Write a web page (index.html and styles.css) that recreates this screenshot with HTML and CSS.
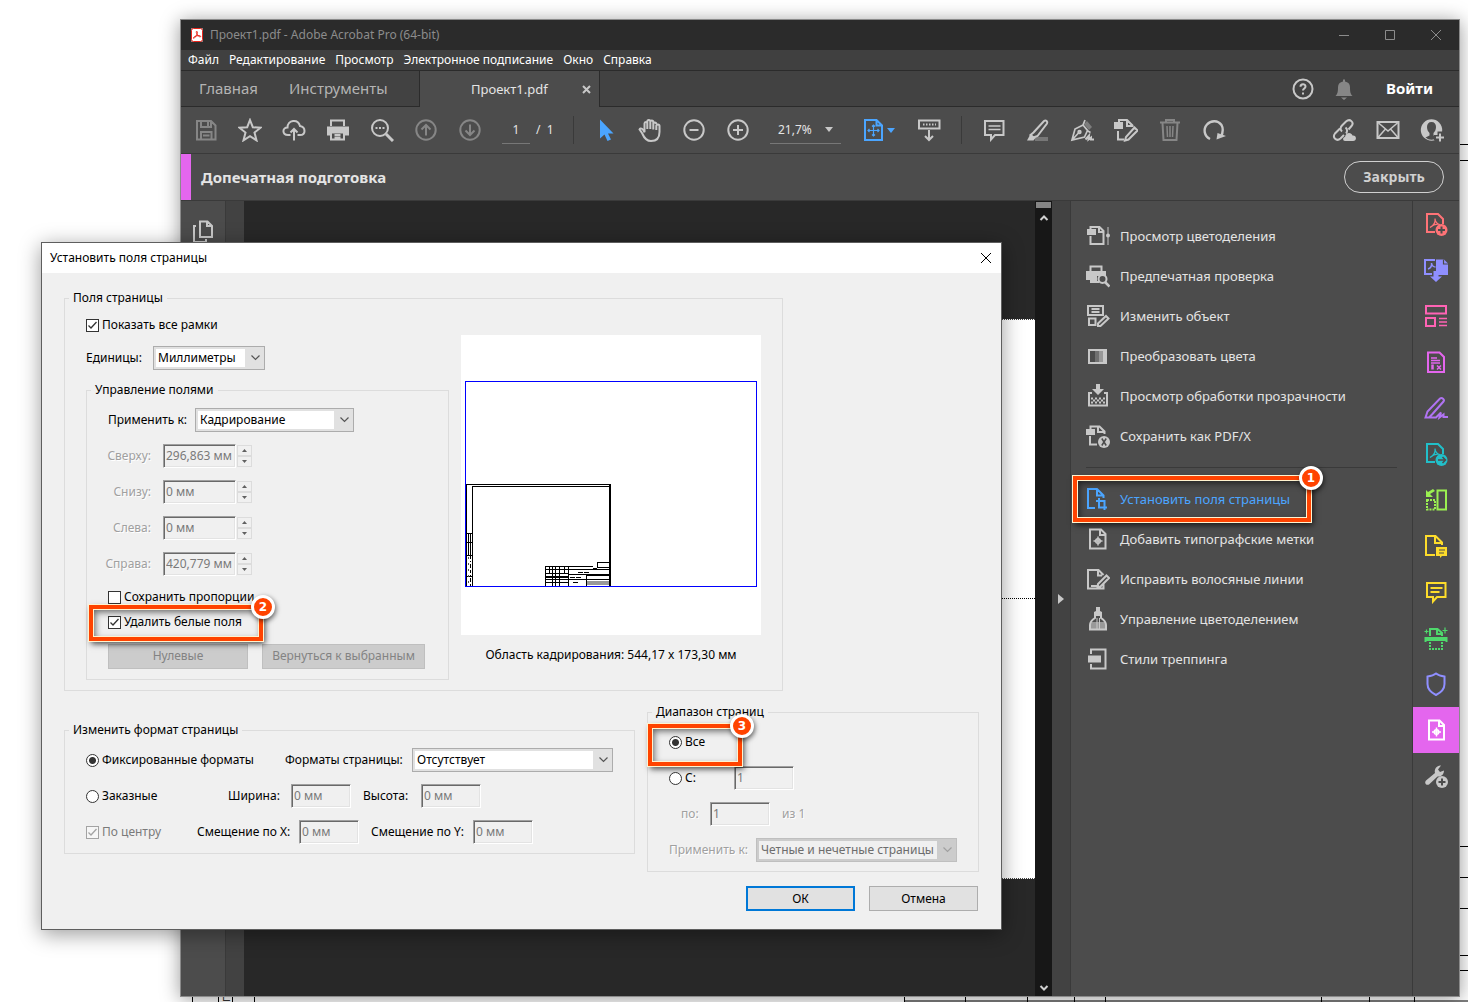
FILE: index.html
```html
<!DOCTYPE html>
<html lang="ru">
<head>
    <meta charset="UTF-8">
    <meta name="viewport" content="width=device-width, initial-scale=1.0">
    <title>Проект1.pdf - Adobe Acrobat Pro (64-bit)</title>
    <link rel="stylesheet" href="styles.css">
</head>
<body>
    <!-- Drawing sheet behind the windows -->
    <svg class="sheet" width="1468" height="1002" stroke="#000" fill="none" aria-hidden="true">
        <path d="M1440 144.500h28M1440 160.500h28M1440 846.500h28M1440 877.500h28M1440 908.500h28M1440 955.500h28M1440 970.500h28"/>
        <path d="M904 1001h564M904.500 990v12M965.500 990v12M1027.500 990v12M1074.500 990v12M1105.500 990v12M1321.500 990v12M1369.500 990v12M1414.500 990v12"/>
        <path d="M192.500 990v12M218.500 990v12M232.500 990v12M254.500 990v12"/>
        <text x="-1002" y="230" transform="rotate(-90)" fill="#333" stroke="none" font-size="12">по</text>
    </svg>

    <div class="window">
        <header class="titlebar">
            <svg class="app-icon" width="12" height="14" viewBox="0 0 12 14"><rect width="12" height="14" rx="2" fill="#fff"/><rect x=".5" y=".5" width="11" height="13" rx="2" fill="none" stroke="#e8251b"/><path d="M5.500 3.500c1.500-.5 1 2-.5 4.500s-3 3-2.500 1.500 6-2.500 7-1.500-1.500 1.500-3-1-1.500-3.500-1-3.500z" fill="none" stroke="#e8251b"/></svg>
            <span class="titlebar-text">Проект1.pdf - Adobe Acrobat Pro (64-bit)</span>
            <button class="win-btn" aria-label="Свернуть"><svg width="12" height="12"><path d="M1 6.500h10"/></svg></button>
            <button class="win-btn" aria-label="Развернуть"><svg width="12" height="12"><path d="M1.500 1.500h9v9h-9z"/></svg></button>
            <button class="win-btn" aria-label="Закрыть окно"><svg width="12" height="12"><path d="M1 1l10 10M11 1L1 11"/></svg></button>
        </header>

        <nav class="menubar">
            <a href="#">Файл</a>
            <a href="#">Редактирование</a>
            <a href="#">Просмотр</a>
            <a href="#">Электронное подписание</a>
            <a href="#">Окно</a>
            <a href="#">Справка</a>
        </nav>

        <div class="tabs">
            <a class="tab tab-home" href="#">Главная</a>
            <a class="tab tab-tools" href="#">Инструменты</a>
            <div class="tab-active">
                <span>Проект1.pdf</span>
                <button class="tab-close" aria-label="Закрыть вкладку"><svg width="9" height="9"><path d="M1 1l7 7M8 1L1 8" stroke-width="2"/></svg></button>
            </div>
            <div class="account">
                <button class="icon-btn" aria-label="Помощь"><svg viewBox="0 0 24 24"><circle cx="12" cy="12" r="9.500"/><path d="M9.500 9.800c0-3.300 5-3.300 5-.3 0 2-2.500 1.900-2.500 4M12 15.500v2"/></svg></button>
                <button class="icon-btn dim" aria-label="Уведомления"><svg viewBox="0 0 24 24"><path class="solid" d="M3.500 19c2-2 2.500-4 2.500-9 0-3 2-5 5-5.500V2.500h2v2c3 .5 5 2.500 5 5.500 0 5 .5 7 2.500 9zM9 20.500h6L12 23z"/></svg></button>
                <a class="signin" href="#">Войти</a>
            </div>
        </div>

        <div class="toolbar">
            <button class="icon-btn dim" aria-label="Сохранить"><svg viewBox="0 0 24 24"><path d="M3 3h14l4.500 4.500V21.500H3zM7 3v6h10V3M14 4v4M7 21v-7h10.500v7M9 17.500h6.500"/></svg></button>
            <button class="icon-btn" aria-label="Избранное"><svg viewBox="0 0 24 24"><path d="M12 2l2.800 7.200 7.700.5-6 4.900 2 7.700-6.500-4.200-6.500 4.200 2-7.700-6-4.900 7.700-.5z"/></svg></button>
            <button class="icon-btn" aria-label="Загрузить в облако"><svg viewBox="0 0 24 24"><path d="M8.500 17H6C0 17 0 9.500 5.500 9.500 5.500 1.500 16 .5 18 8c6 1 6 9 0 9h-2.500M12 22.500V11M8.500 14.500L12 11l3.500 3.500"/></svg></button>
            <button class="icon-btn" aria-label="Печать"><svg viewBox="0 0 24 24"><path class="solid" d="M1 8.500h22v9h-4V15H5v2.500H1z"/><path d="M5 8V2.500h13V8M5 14.500h13v7H5zM8.500 17h6M8.500 19.500h6"/></svg></button>
            <button class="icon-btn" aria-label="Найти"><svg viewBox="0 0 24 24"><circle cx="10" cy="10" r="8"/><path d="M16 16l7 7" stroke-width="3"/><path class="dots" d="M5.500 10h2M9 10h2M12.500 10h2"/></svg></button>
            <button class="icon-btn dim" aria-label="Предыдущая страница"><svg viewBox="0 0 24 24"><circle cx="12" cy="12" r="9.700"/><path d="M12 17.500V7M7.500 11.500L12 7l4.500 4.500"/></svg></button>
            <button class="icon-btn dim" aria-label="Следующая страница"><svg viewBox="0 0 24 24"><circle cx="12" cy="12" r="9.700"/><path d="M12 6.500V17M7.500 12.500L12 17l4.500-4.500"/></svg></button>
            <input class="page-num" type="text" value="1" aria-label="Номер страницы">
            <span class="page-total">/&nbsp; 1</span>
            <span class="sep"></span>
            <button class="icon-btn active" aria-label="Выделение"><svg viewBox="0 0 24 24"><path class="solid" d="M6 1.500v19l4.500-4 3 6.500 3.500-1.500-3-6h5.500z"/></svg></button>
            <button class="icon-btn" aria-label="Рука"><svg viewBox="0 0 24 24"><path d="M6.500 14V5.500c0-2 2.800-2 2.800 0V11 3.500c0-2 3-2 3 0V11 4c0-2 3-2 3 0v7.500V6c0-2 3-2 3 0M18.300 12V8c0-2 3.200-2 3.200 0v6c0 6-3.500 9-8.500 9-5 0-7-3.500-8.500-7-1-2.500-2-3-3-4.500 1-2.500 4-.5 5 3"/></svg></button>
            <button class="icon-btn" aria-label="Уменьшить"><svg viewBox="0 0 24 24"><circle cx="12" cy="12" r="9.700"/><path d="M7.500 12h9"/></svg></button>
            <button class="icon-btn" aria-label="Увеличить"><svg viewBox="0 0 24 24"><circle cx="12" cy="12" r="9.700"/><path d="M7 12h10M12 7v10"/></svg></button>
            <select class="zoom" aria-label="Масштаб"><option>21,7%</option></select>
            <button class="icon-btn fit active" aria-label="По размеру страницы"><svg viewBox="0 0 24 24"><path d="M4 2h11.500L21 7.500V22H4zM15.500 2v5.500H21"/><path d="M12.500 7v11M7 12.500h11M11 8.500L12.500 7 14 8.500M11 16.500l1.500 1.500 1.500-1.500M8.500 11L7 12.500 8.500 14M16.500 11l1.500 1.500-1.500 1.500" stroke-width="1.200"/></svg><svg class="caret" viewBox="0 0 8 5"><path class="solid" d="M0 0h8L4 5z"/></svg></button>
            <button class="icon-btn" aria-label="Панель инструментов"><svg viewBox="0 0 24 24"><path d="M2 2.500h20.500v8H2zM12 12v10M8 18l4 4 4-4"/><path class="dots" d="M6 6.500h1.500M9 6.500h1.500M12 6.500h1.500M15 6.500h1.500M18 6.500h1"/></svg></button>
            <span class="sep"></span>
            <button class="icon-btn" aria-label="Комментарий"><svg viewBox="0 0 24 24"><path d="M3 3h18.500v14H13l-4 4.500V17H3z"/><path d="M6.500 8h12M6.500 11.500h12" stroke-width="1.500"/></svg></button>
            <button class="icon-btn" aria-label="Маркер"><svg viewBox="0 0 24 24"><path d="M9 21h13" stroke="#777" stroke-width="4"/><path d="M7.500 14.500L18 3c2-1.500 4 .5 3 2.500L11.500 18l-4 1.500-3-2.500z"/><path class="solid" d="M1 22.500l3.500-6.500 5 4-2 2.500z"/></svg></button>
            <button class="icon-btn" aria-label="Подпись"><svg viewBox="0 0 24 24"><path class="solid" d="M14 6l3-3 5 6-3 3z" opacity=".4"/><path d="M2 22l3-11 8-4 4.500 5.500-3 6.500zM2 22l6.500-7M13 7l2-5M17 12.500l3.500 2" stroke-width="1.700"/><circle cx="9.500" cy="14" r="1.200"/><path d="M15.500 21.500l3.500-4-.5 4 2.500-2v2H24"/></svg></button>
            <button class="icon-btn" aria-label="Редактировать PDF"><svg viewBox="0 0 24 24"><path class="solid" d="M0 4h9v7H0z"/><path d="M5 4V2h8l5.500 5.500V9M13 2v6h5M4 13v8.500h6M20.500 9.500L23.500 12.500l-9 9-3.500 1 1-3.500z"/></svg></button>
            <button class="icon-btn dim" aria-label="Удалить"><svg viewBox="0 0 24 24"><path d="M2 4.500h20M8 4V2h8v2M4.500 5l1 17h13l1-17"/><path d="M9 8l.5 11M12 8v11M15 8l-.5 11" stroke-width="1.500"/></svg></button>
            <button class="icon-btn" aria-label="Повернуть"><svg viewBox="0 0 24 24"><path d="M8 21C2 18 1 11 5 6.500 9 2 16 2 19.500 7c2 3.500 1.500 7.500-.5 11.500" stroke-width="2.400"/><path class="solid" d="M14.500 21.500l1-6.500 8.500 3z"/></svg></button>
            <button class="icon-btn push" aria-label="Ссылка"><svg viewBox="0 0 24 24"><path d="M10 13.500c-2-2-1.500-4.500 0-6l4-4c4-3.500 8.500 1 5.500 4.500l-3 3.500M13.500 9.500c2 1.500 2 4.500.5 6M8 10.500l-5 5c-3 4 1.500 8.500 5.500 5l3.500-3.500"/><path class="solid" d="M13 23c-2.500 0-2.500-4 0-4 .5-5 6.500-5 7.500-1.500 4.500-.5 4.500 5.500.5 5.500z"/></svg></button>
            <button class="icon-btn" aria-label="Почта"><svg viewBox="0 0 24 24"><path d="M1.500 4h21v16h-21z"/><path d="M2 4.500l10 8.500 10-8.500M2 19.500l7.500-8.500M22 19.500L14.500 11" stroke-width="1.500"/></svg></button>
            <button class="icon-btn" aria-label="Добавить пользователя"><svg viewBox="0 0 24 24"><circle class="solid" cx="11.500" cy="12" r="10.700"/><path d="M11.500 4c3 0 4.500 2 4.500 5 0 2.500-1 4.500-2.500 6v2.500l4 2a9 9 0 0 1-12 0l4-2V15C8 13.500 7 11.500 7 9c0-3 1.500-5 4.500-5z" fill="#4c4c4c" stroke="none"/><path d="M20 13.500v11M14 19.500h10" stroke="#4c4c4c" stroke-width="5"/><path d="M20 15.500v8M16 19.500h8"/></svg></button>
        </div>

        <div class="toolhead">
            <h1>Допечатная подготовка</h1>
            <button class="close-btn">Закрыть</button>
        </div>

        <div class="workspace">
            <div class="left-rail">
                <button class="icon-btn" aria-label="Миниатюры страниц"><svg viewBox="0 0 24 24"><path d="M9 1.500h7.500L21 6v11H9zM16 1.500V6h5M5 6H3v16h12v-3"/></svg></button>
            </div>
            <div class="gutter"></div>
            <div class="canvas"><div class="page"><div class="page-half"></div></div></div>
            <div class="scrollbar">
                <span class="scroll-thumb"></span>
                <svg viewBox="0 0 10 8"><path d="M1.500 6L5 2.500 8.500 6"/></svg>
                <svg class="scroll-down" viewBox="0 0 10 8"><path d="M1.500 2L5 5.500 8.500 2"/></svg>
            </div>
            <div class="splitter"><svg width="6" height="10"><path class="solid" d="M0 0l6 5-6 5z"/></svg></div>

            <aside class="panel">
                <a class="tool" href="#"><svg viewBox="0 0 24 24"><path class="solid" d="M1 5h9v6H1z"/><path d="M4.500 5V3h9l4 4v13h-13v-8M13 3v5h4"/><path d="M22 3v18" stroke="#888"/><circle class="solid" cx="22" cy="11.500" r="2"/></svg>Просмотр цветоделения</a>
                <a class="tool" href="#"><svg viewBox="0 0 24 24"><path class="solid" d="M0 7h20v5h-9v6H4v-2H0z"/><path d="M4.500 7V2.500h11V7M5 11.500v6.500h8M7 14h4"/><circle cx="16.500" cy="15" r="4" fill="#4c4c4c"/><path d="M19 18l4.500 4.500" stroke-width="2.500"/></svg>Предпечатная проверка</a>
                <a class="tool" href="#"><svg viewBox="0 0 24 24"><path d="M2 2h15v9H2zM5.500 5h8M5.500 8h8M3 14.500h6.500V21H3zM20 12l2.500 2.500-8 7.500H12v-2.500z"/></svg>Изменить объект</a>
                <a class="tool" href="#"><svg viewBox="0 0 24 24"><path class="solid" d="M2 5h19v15H2z"/><path d="M4 7h5v11H4z" fill="#4c4c4c" stroke="none"/><path d="M9 7h4v11H9z" fill="#707070" stroke="none"/><path d="M13 7h4v11h-4z" fill="#989898" stroke="none"/></svg>Преобразовать цвета</a>
                <a class="tool" href="#"><svg viewBox="0 0 24 24"><path class="solid" d="M10 0h4v5h4l-6 6-6-6h4z"/><path d="M6 9H3v12.500h18V9h-3"/><path d="M5 14.500h14M7 16.500h12M5 18.500h14" stroke-dasharray="2 2"/></svg>Просмотр обработки прозрачности</a>
                <a class="tool" href="#"><svg viewBox="0 0 24 24"><path class="solid" d="M0 5h9v6H0z"/><path d="M4.500 5V2.500h9l5 5V10M12 3v5h6M4 12v8.500h7"/><circle class="solid" cx="18" cy="18" r="6"/><path d="M15.800 14.500l4.400 7M20.200 14.500l-4.400 7" stroke="#4c4c4c" stroke-width="1.500"/></svg>Сохранить как PDF/X</a>
                <hr>
                <a class="tool active" href="#"><svg viewBox="0 0 24 24"><path d="M9 21H2V2h9l6.500 6.500V11M11 2v6.500h6.500M13 11v9.500h8M10 14h8.500v9"/></svg>Установить поля страницы<span class="callout callout-1"><b>1</b></span></a>
                <a class="tool" href="#"><svg viewBox="0 0 24 24"><path d="M4 2.500h11L19.500 7v14.500H4zM14 3v5h5"/><path d="M12 9.500v9M7.500 14h9" stroke-width="1.500"/><circle cx="12" cy="14" r="2.300" stroke-width="1.500"/></svg>Добавить типографские метки</a>
                <a class="tool" href="#"><svg viewBox="0 0 24 24"><path d="M17.500 17v4.500H2V3h10.500l5 5M12 3v5.500h4M5 19h6M20.500 8.500L23 11l-8.500 8.500-3 .5.500-3z"/></svg>Исправить волосяные линии</a>
                <a class="tool" href="#"><svg viewBox="0 0 24 24"><path d="M4 15h16v7H4z" fill="#999" stroke="none"/><path class="solid" d="M10 0h4v4l2 1v4H8V5l2-1z"/><path d="M9 8v3c-3 2-5 5-5 7v4.500h16V18c0-2-2-5-5-7V8"/><path d="M11 11v11M13.500 11v11" stroke-width="1"/></svg>Управление цветоделением</a>
                <a class="tool" href="#"><svg viewBox="0 0 24 24"><path d="M5 7V2.500h14.500v19H5V17"/><rect class="solid" x="2" y="8.500" width="13" height="7"/></svg>Стили треппинга</a>
            </aside>

            <div class="right-rail">
                <button class="rail-btn red" aria-label="Создать PDF"><svg viewBox="0 0 24 24"><path d="M11 20H3V2h11l5 5v5"/><path d="M6 15.500c4-2 5.500-5.500 5-9 0 3 2.500 6 5 6-3-1-7 .5-10 3z" stroke-width="1.200"/><circle class="solid" cx="17.500" cy="18" r="6"/><path d="M17.500 14.500v7M14 18h7" stroke="#4c4c4c"/></svg></button>
                <button class="rail-btn violet" aria-label="Объединить файлы"><svg viewBox="0 0 24 24"><path class="solid" d="M12 1.500h8l4 4V17h-9.500v1.500H18l-6 5.500-6-5.500h3.500V13H12z"/><path d="M8 16H1V2h10"/><path d="M4 11c3-1 4-3 3.500-6 .5 3 2 4 4 4" stroke-width="1.500"/><path d="M19.500 1.500V6H24" stroke="#4c4c4c" stroke-width="1.200"/></svg></button>
                <button class="rail-btn pink" aria-label="Систематизировать"><svg viewBox="0 0 24 24"><path d="M2 2h20v7.500H2zM2 14h9v8H2z"/><path d="M15 14.500h8M15 18h8M15 21.500h8" stroke-width="1.500"/></svg></button>
                <button class="rail-btn magenta" aria-label="Подготовить форму"><svg viewBox="0 0 24 24"><path d="M4 2.500h11.500L20 7v15H4z"/><path d="M7 8h6M7 10.500h9M7 13h9M13 15.500l4 4M17 15.500l-4 4" stroke-width="1.500"/><path d="M8.500 14.500v5" stroke-width="2.500"/></svg></button>
                <button class="rail-btn purple" aria-label="Заполнить и подписать"><svg viewBox="0 0 24 24"><path d="M1.500 21.500l2-6L16 2.500c2-1.500 5 1 3.500 3L8 18.500l-3 3zM2 21.500h10l5-5-1.500 5 4-3v2.500H24"/></svg></button>
                <button class="rail-btn cyan" aria-label="Экспорт PDF"><svg viewBox="0 0 24 24"><path d="M11 20H3V2h11l5 5v5"/><path d="M6 15.500c4-2 5.500-5.500 5-9 0 3 2.500 6 5 6-3-1-7 .5-10 3z" stroke-width="1.200"/><circle class="solid" cx="17.500" cy="18" r="6"/><path d="M14 18h7M18.500 15l3 3-3 3" stroke="#4c4c4c" stroke-width="1.500"/></svg></button>
                <button class="rail-btn lime" aria-label="Упорядочить страницы"><svg viewBox="0 0 24 24"><path d="M13.500 2.500H22v19h-8.500z"/><path class="solid" d="M2 2l2 2 5-3 2 2-5 3 3 3H2z"/><path d="M3 12h8v9.500H3z" stroke-dasharray="2 1"/></svg></button>
                <button class="rail-btn yellow" aria-label="Отправить на рецензирование"><svg viewBox="0 0 24 24"><path d="M11 21H2V2h9.500L18 8.500V11M11 2v7h7"/><path class="solid" d="M12 13h11v9h-5l-2 2v-2h-4z"/><path d="M15 16h6M15 19h5" stroke="#4c4c4c" stroke-width="1"/></svg></button>
                <button class="rail-btn yellow" aria-label="Комментарии"><svg viewBox="0 0 24 24"><path d="M3 3h18.500v14H13l-4 4.500V17H3zM6.500 8h12M6.500 12h9"/></svg></button>
                <button class="rail-btn green" aria-label="Сканирование"><svg viewBox="0 0 24 24"><path d="M6 10V3h7.500L18 7v3M13 3v5h5M1.500 16v-4h21v4"/><path class="solid" d="M1 11h22v4H1z"/><path d="M6 16v7h12v-7" stroke-dasharray="2 1"/><path d="M21 1.500v6M18.500 4.500h5M2.500 3.500v4M.5 5.500h4" stroke-width="1.200"/></svg></button>
                <button class="rail-btn violet" aria-label="Защитить"><svg viewBox="0 0 24 24"><path d="M12 1.500c2.500 2 5 2.500 8.500 3V12c0 5-3.500 8.500-8.500 11-5-2.500-8.500-6-8.500-11V4.500c3.500-.5 6-1 8.500-3z"/></svg></button>
                <button class="rail-btn current" aria-label="Допечатная подготовка"><svg viewBox="0 0 24 24"><path d="M5 2.500h10.500L20 7v14.500H5zM15 3v5h5"/><path d="M12.500 9.500v9M8 14h9" stroke-width="1.500"/><circle cx="12.500" cy="14" r="2.300" stroke-width="1.500"/></svg></button>
                <button class="rail-btn" aria-label="Дополнительные инструменты"><svg viewBox="0 0 24 24"><path class="solid" d="M11 9c-1-4 2-8 6-7.500l-3 4 2 2.500 4-1.500c0 4-3 6.500-6.500 6L5 20.500c-3 1.500-5-2-3-4z"/><circle cx="18" cy="18" r="6" class="solid"/><path d="M18 14.500v7M14.500 18h7" stroke="#4c4c4c"/></svg></button>
            </div>
        </div>
    </div>

    <form class="dialog" role="dialog" aria-labelledby="dialogTitle">
        <div class="dialog-title">
            <h2 id="dialogTitle">Установить поля страницы</h2>
            <button type="button" class="dialog-close" aria-label="Закрыть"><svg width="12" height="12"><path d="M1 1l10 10M11 1L1 11"/></svg></button>
        </div>
        <div class="dialog-body">
            <fieldset class="margins">
                <legend>Поля страницы</legend>
                <div class="margins-grid">
                    <div class="stack">
                        <label class="check"><input type="checkbox" checked>Показать все рамки</label>
                        <div class="row">
                            <label class="w-units" for="units">Единицы:</label>
                            <select class="combo units" id="units"><option>Миллиметры</option></select>
                        </div>
                        <fieldset class="controls">
                            <legend>Управление полями</legend>
                            <div class="stack">
                                <div class="row">
                                    <label class="w-apply" for="applyTo">Применить к:</label>
                                    <select class="combo apply" id="applyTo"><option>Кадрирование</option></select>
                                </div>
                                <div class="row off">
                                    <label class="w-side" for="top">Сверху:</label>
                                    <input class="field side" id="top" type="text" value="296,863 мм" disabled>
                                    <span class="spin"><button type="button" disabled aria-label="Больше"></button><button type="button" class="down" disabled aria-label="Меньше"></button></span>
                                </div>
                                <div class="row off">
                                    <label class="w-side" for="bottom">Снизу:</label>
                                    <input class="field side" id="bottom" type="text" value="0 мм" disabled>
                                    <span class="spin"><button type="button" disabled aria-label="Больше"></button><button type="button" class="down" disabled aria-label="Меньше"></button></span>
                                </div>
                                <div class="row off">
                                    <label class="w-side" for="left">Слева:</label>
                                    <input class="field side" id="left" type="text" value="0 мм" disabled>
                                    <span class="spin"><button type="button" disabled aria-label="Больше"></button><button type="button" class="down" disabled aria-label="Меньше"></button></span>
                                </div>
                                <div class="row off">
                                    <label class="w-side" for="right">Справа:</label>
                                    <input class="field side" id="right" type="text" value="420,779 мм" disabled>
                                    <span class="spin"><button type="button" disabled aria-label="Больше"></button><button type="button" class="down" disabled aria-label="Меньше"></button></span>
                                </div>
                                <div class="checks">
                                    <label class="check"><input type="checkbox">Сохранить пропорции</label>
                                    <label class="check"><input type="checkbox" checked>Удалить белые поля<span class="callout callout-2"><b>2</b></span></label>
                                </div>
                                <div class="row reset">
                                    <button type="button" class="btn zero" disabled>Нулевые</button>
                                    <button type="button" class="btn revert" disabled>Вернуться к выбранным</button>
                                </div>
                            </div>
                        </fieldset>
                    </div>
                    <div class="preview">
                        <svg viewBox="0 0 300 300" fill="none" stroke="#000" shape-rendering="crispEdges">
                            <rect width="300" height="300" fill="#fff" stroke="none"/>
                            <path d="M5.500 251V149.500h144V251z"/>
                            <path d="M149 150v101" stroke-width="2"/>
                            <path d="M11.500 251V151.500h137"/>
                            <path d="M7.500 198v22M9.500 198v22M6 198.500h5M6 207.500h5M6 220.500h5M6 241.500h5"/>
                            <path d="M9.500 207v44" stroke-dasharray="3 2 1 2 4 2"/>
                            <path d="M7.500 222v29" stroke="#555" stroke-dasharray="2 4"/>
                            <path d="M84 231.500h48M84 234.500h23M84 238.500h23M84 241.500h23M84 244.500h23M84 247.500h23M107 234.500h41M107 239.500h41M125 244.500h23M107 244.500h18M84.500 231v20M88.500 231v8M91.500 231v20M94.500 231v20M98.500 231v20M103.500 231v8M107.500 231v20M125.500 239v12M136.500 227.500h12M136.500 227v5h12"/>
                            <path d="M84 242h23M125 240h23" stroke-width="2"/>
                            <path d="M117 237.500h12M109 242.500h12M112 247.500h6M132 233.500h4" stroke-dasharray="5 1"/>
                            <path d="M126 247.500h22" stroke="#999" stroke-width="4"/>
                            <path d="M4.500 46.500h291v205h-291z" stroke="#00f"/>
                        </svg>
                        <p>Область кадрирования: 544,17 x 173,30 мм</p>
                    </div>
                </div>
            </fieldset>

            <div class="bottom-grid">
                <fieldset class="format">
                    <legend>Изменить формат страницы</legend>
                    <div class="stack">
                        <div class="row">
                            <label class="check first-1"><input type="radio" name="format" checked>Фиксированные форматы</label>
                            <label class="w-format" for="pageSize">Форматы страницы:</label>
                            <select class="combo wide" id="pageSize"><option>Отсутствует</option></select>
                        </div>
                        <div class="row">
                            <label class="check first-2"><input type="radio" name="format">Заказные</label>
                            <label class="w-size" for="pageWidth">Ширина:</label>
                            <input class="field" id="pageWidth" type="text" value="0 мм" disabled>
                            <label class="w-size next" for="pageHeight">Высота:</label>
                            <input class="field" id="pageHeight" type="text" value="0 мм" disabled>
                        </div>
                        <div class="row">
                            <label class="check first-3 disabled"><input type="checkbox" checked disabled>По центру</label>
                            <label class="w-offset" for="offsetX">Смещение по X:</label>
                            <input class="field" id="offsetX" type="text" value="0 мм" disabled>
                            <label class="w-offset next" for="offsetY">Смещение по Y:</label>
                            <input class="field" id="offsetY" type="text" value="0 мм" disabled>
                        </div>
                    </div>
                </fieldset>

                <fieldset class="range">
                    <legend>Диапазон страниц</legend>
                    <div class="stack">
                        <div class="row">
                            <label class="check"><input type="radio" name="range" checked>Все<span class="callout callout-3"><b>3</b></span></label>
                        </div>
                        <div class="row">
                            <label class="check w-from"><input type="radio" name="range">С:</label>
                            <input class="field" type="text" value="1" aria-label="С страницы" disabled>
                        </div>
                        <div class="row off to">
                            <label class="w-to" for="pageTo">по:</label>
                            <input class="field" id="pageTo" type="text" value="1" disabled>
                            <span class="of">из 1</span>
                        </div>
                        <div class="row off">
                            <label class="w-apply" for="parity">Применить к:</label>
                            <select class="combo wide" id="parity" disabled><option>Четные и нечетные страницы</option></select>
                        </div>
                    </div>
                </fieldset>
            </div>

            <div class="actions">
                <button type="submit" class="btn ok">ОК</button>
                <button type="button" class="btn">Отмена</button>
            </div>
        </div>
    </form>
</body>
</html>
```

FILE: styles.css
```css
* {
    box-sizing: border-box;
}
body {
    margin: 0;
    height: 100vh;
    position: relative;
    overflow: hidden;
    background: #fff;
    color: #000;
    font-family: "Noto Sans", sans-serif;
    font-size: 12px;
    line-height: 18px;
}
a {
    color: inherit;
    text-decoration: none;
}
button, input, select {
    font: inherit;
    color: inherit;
    margin: 0;
}
button {
    padding: 0;
    border: none;
    background: none;
}
svg {
    display: block;
    flex: none;
    fill: none;
    stroke: currentColor;
}
.solid {
    fill: currentColor;
    stroke: none;
}
.sheet {
    position: absolute;
    left: 0;
    top: 0;
    stroke: #000;
}

/* main window */
.window {
    position: absolute;
    left: 180px;
    top: 19px;
    right: 8px;
    bottom: 5px;
    display: flex;
    flex-direction: column;
    border: 1px solid #8a8a8a;
    background: #4c4c4c;
    color: #e4e4e4;
    box-shadow: 0 2px 18px rgba(0, 0, 0, 0.4);
}
.titlebar {
    display: flex;
    align-items: center;
    height: 30px;
    padding-left: 10px;
    background: #2b2b2b;
    color: #8c8c8c;
}
.app-icon {
    margin-right: 7px;
}
.titlebar-text {
    flex: 1;
}
.win-btn {
    width: 46px;
    height: 30px;
    display: flex;
    align-items: center;
    justify-content: center;
}
.menubar {
    display: flex;
    gap: 10px;
    height: 21px;
    padding-left: 7px;
    line-height: 20px;
    background: #404040;
    border-bottom: 1px solid #2b2b2b;
    color: #fff;
}
.tabs {
    display: flex;
    align-items: stretch;
    height: 36px;
    background: #424242;
    font-size: 15px;
    line-height: 35px;
}
.tab {
    color: #b4b4b4;
    border-bottom: 1px solid #2b2b2b;
}
.tab-home {
    width: 90px;
    padding-left: 18px;
}
.tab-tools {
    width: 149px;
    padding-left: 18px;
    border-right: 1px solid #2b2b2b;
}
.tab-active {
    width: 180px;
    display: flex;
    align-items: center;
    justify-content: space-between;
    padding: 0 8px 0 51px;
    background: #4c4c4c;
    border-right: 1px solid #2b2b2b;
    font-size: 13px;
}
.tab-close {
    color: #c8c8c8;
}
.account {
    flex: 1;
    display: flex;
    align-items: center;
    justify-content: flex-end;
    padding-right: 26px;
    border-bottom: 1px solid #2b2b2b;
}
.account .icon-btn {
    width: 41px;
}
.signin {
    margin-left: 21px;
    font-weight: bold;
    color: #fff;
}
.icon-btn {
    width: 44px;
    height: 44px;
    flex: none;
    display: flex;
    align-items: center;
    justify-content: center;
    color: #c8c8c8;
}
.icon-btn svg, .tool svg, .rail-btn svg {
    width: 24px;
    height: 24px;
    stroke-width: 2px;
}
.icon-btn.dim {
    color: #868686;
}
.icon-btn.active {
    color: #4ba5ff;
}
.toolbar {
    display: flex;
    align-items: center;
    height: 47px;
    padding: 0 5px 0 3px;
    border-bottom: 1px solid #3a3a3a;
}
.page-num {
    width: 28px;
    height: 28px;
    margin-left: 10px;
    padding: 0;
    text-align: center;
    background: none;
    border: none;
    border-bottom: 1px solid #777;
}
.page-total {
    width: 36px;
    padding-left: 6px;
}
.sep {
    width: 1px;
    height: 28px;
    margin: 0 10px;
    background: #3a3a3a;
}
.page-total + .sep {
    margin-left: 7px;
}
.zoom {
    width: 71px;
    height: 28px;
    margin: 0 22px 0 10px;
    padding: 0 8px;
    appearance: none;
    border: none;
    border-bottom: 1px solid #777;
    background: url("data:image/svg+xml,%3Csvg xmlns='http://www.w3.org/2000/svg' width='8' height='5'%3E%3Cpath d='M0 0h8L4 5z' fill='%23c8c8c8'/%3E%3C/svg%3E") no-repeat right 8px center;
}
.icon-btn.fit {
    width: 32px;
    margin-right: 12px;
    gap: 2px;
    justify-content: flex-end;
}
.icon-btn .caret {
    width: 8px;
    height: 5px;
}
.icon-btn.push {
    margin-left: auto;
}
.toolhead {
    display: flex;
    align-items: center;
    justify-content: space-between;
    height: 47px;
    padding: 0 15px 0 10px;
    border-bottom: 1px solid #3a3a3a;
    background: linear-gradient(#e466ee, #e466ee) no-repeat left / 10px 100%;
    padding-left: 20px;
}
.toolhead h1 {
    margin: 0;
    font-size: 15px;
    line-height: 24px;
}
.close-btn {
    width: 100px;
    height: 32px;
    border: 1px solid #d0d0d0;
    border-radius: 16px;
    font-size: 14px;
    font-weight: bold;
    color: #d0d0d0;
}
.workspace {
    flex: 1;
    min-height: 0;
    display: flex;
}
.left-rail {
    width: 45px;
    padding-top: 9px;
    border-right: 1px solid #3a3a3a;
}
.gutter {
    width: 18px;
    background: #424242;
}
.canvas {
    flex: 1;
    display: flex;
    align-items: center;
    background: #282828;
}
.page {
    flex: 1;
    height: 560px;
    background: #fff;
    border: dotted #444;
    border-width: 1px 0;
}
.page-half {
    height: 50%;
    border-bottom: 1px dotted #000;
}
.scrollbar {
    width: 17px;
    display: flex;
    flex-direction: column;
    align-items: center;
    background: #171717;
    color: #d0d0d0;
}
.scrollbar svg {
    width: 10px;
    height: 8px;
    stroke-width: 2px;
}
.scroll-thumb {
    width: 15px;
    height: 6px;
    margin: 1px 0 6px;
    background: #868686;
}
.scrollbar .scroll-down {
    margin-top: auto;
    margin-bottom: 4px;
}
.splitter {
    width: 19px;
    display: flex;
    align-items: center;
    justify-content: center;
    background: #424242;
    border-right: 1px solid #3a3a3a;
    color: #c8c8c8;
}
.panel {
    width: 342px;
    padding: 15px;
    border-right: 1px solid #3a3a3a;
    font-size: 13px;
}
.panel hr {
    height: 1px;
    margin: 11px 0;
    border: none;
    background: #3a3a3a;
}
.tool {
    position: relative;
    display: flex;
    align-items: center;
    gap: 10px;
    height: 40px;
}
.tool svg {
    color: #c8c8c8;
}
.tool.active, .tool.active svg {
    color: #4ba5ff;
}
.right-rail {
    width: 46px;
}
.rail-btn {
    width: 46px;
    height: 46px;
    display: flex;
    align-items: center;
    justify-content: center;
    color: #c8c8c8;
}
.red { color: #ff7377; }
.violet { color: #8f8fff; }
.pink { color: #ff63b4; }
.magenta { color: #e466ee; }
.purple { color: #b073f2; }
.cyan { color: #21bfc9; }
.lime { color: #9bf051; }
.yellow { color: #fddc2b; }
.green { color: #4fd96c; }
.rail-btn.current {
    background: #e466ee;
    color: #fff;
}

/* numbered highlight frames */
.callout {
    position: absolute;
    border: 4px solid #ff4300;
    box-shadow: 0 0 0 1px #fff3cf, inset 0 0 0 1px #fff3cf, 2px 3px 6px rgba(0, 0, 0, 0.7), inset 2px 3px 7px rgba(0, 0, 0, 0.6);
    pointer-events: none;
}
.callout b {
    position: absolute;
    top: -14px;
    right: -16px;
    width: 24px;
    height: 24px;
    border: 3px solid #fff;
    border-radius: 50%;
    background: #ff4300;
    box-shadow: 1px 2px 5px rgba(0, 0, 0, 0.6);
    color: #fff;
    font: bold 12px/18px "DejaVu Sans", sans-serif;
    text-align: center;
}
.callout-1 {
    left: -13px;
    top: -3px;
    width: 238px;
    height: 46px;
}
.callout-2 {
    left: -19px;
    top: -8px;
    width: 174px;
    height: 36px;
}
.callout-3 {
    left: -21px;
    top: -9px;
    width: 94px;
    height: 42px;
}

/* dialog */
.dialog {
    position: absolute;
    left: 41px;
    top: 242px;
    border: 1px solid #5e5e5e;
    background: #f0f0f0;
    box-shadow: 0 4px 20px rgba(0, 0, 0, 0.4);
}
.dialog-title {
    display: flex;
    align-items: center;
    justify-content: space-between;
    height: 30px;
    padding: 0 9px 0 8px;
    background: #fff;
}
.dialog-title h2 {
    margin: 0;
    font-size: 12px;
    font-weight: normal;
}
.dialog-body {
    padding: 17px 22px 18px;
}
fieldset {
    margin: 0;
    padding: 10px 21px;
    min-width: 0;
    border: 1px solid #dcdcdc;
}
legend {
    margin-left: -17px;
    padding: 0 4px;
    height: 16px;
    line-height: 16px;
}
.margins {
    width: 719px;
}
.margins-grid {
    display: grid;
    grid-template-columns: 1fr 300px;
    gap: 12px;
}
.stack {
    display: flex;
    flex-direction: column;
    gap: 12px;
}
.row {
    display: flex;
    align-items: center;
    height: 24px;
}
.check {
    position: relative;
    display: flex;
    align-items: center;
    gap: 3px;
    width: max-content;
    height: 18px;
}
.check.disabled {
    color: #7a7a7a;
}
input[type="checkbox"], input[type="radio"] {
    appearance: none;
    width: 13px;
    height: 13px;
    border: 1px solid #333;
    background: #fff;
}
input[type="checkbox"]:checked {
    background: #fff url("data:image/svg+xml,%3Csvg xmlns='http://www.w3.org/2000/svg' width='11' height='11'%3E%3Cpath d='M1.500 5.500L4 8l5.500-6' fill='none' stroke='%23333' stroke-width='1.300'/%3E%3C/svg%3E");
}
input[type="checkbox"]:disabled {
    opacity: 0.4;
}
input[type="radio"] {
    border-radius: 50%;
}
input[type="radio"]:checked {
    background: radial-gradient(circle, #333 3px, #fff 4px);
}
.combo {
    height: 24px;
    padding: 0 20px 0 4px;
    appearance: none;
    border: 1px solid #acacac;
    border-radius: 0;
    background:
        url("data:image/svg+xml,%3Csvg xmlns='http://www.w3.org/2000/svg' width='9' height='6'%3E%3Cpath d='M.5.500l4 4 4-4' fill='none' stroke='%23555' stroke-width='1.200'/%3E%3C/svg%3E") no-repeat right 4px center,
        linear-gradient(#fff, #fff) no-repeat 2px 2px / calc(100% - 21px) calc(100% - 4px),
        #e1e1e1;
}
.combo:disabled {
    border-color: #bfbfbf;
    color: #6d6d6d;
    opacity: 1;
    background:
        url("data:image/svg+xml,%3Csvg xmlns='http://www.w3.org/2000/svg' width='9' height='6'%3E%3Cpath d='M.5.500l4 4 4-4' fill='none' stroke='%23a0a0a0' stroke-width='1.200'/%3E%3C/svg%3E") no-repeat right 4px center,
        linear-gradient(#f0f0f0, #f0f0f0) no-repeat 2px 2px / calc(100% - 21px) calc(100% - 4px),
        #ccc;
}
.units { width: 112px; }
.apply { width: 159px; }
.wide { width: 201px; }
.field {
    width: 60px;
    height: 24px;
    padding: 0 2px 2px;
    border: 1px solid;
    border-color: #a0a0a0 #fff #fff #a0a0a0;
    box-shadow: inset 1px 1px #696969, inset -1px -1px #e3e3e3;
    background: #f0f0f0;
    color: #7a7a7a;
}
.field.side {
    width: 73px;
}
.spin {
    display: flex;
    flex-direction: column;
    margin-left: 1px;
}
.spin button {
    width: 15px;
    height: 11px;
    border: 1px solid #dcdcdc;
    background: url("data:image/svg+xml,%3Csvg xmlns='http://www.w3.org/2000/svg' width='5' height='3'%3E%3Cpath d='M0 3h5L2.500 0z' fill='%23606060'/%3E%3C/svg%3E") no-repeat center;
}
.spin .down {
    background-image: url("data:image/svg+xml,%3Csvg xmlns='http://www.w3.org/2000/svg' width='5' height='3'%3E%3Cpath d='M0 0h5L2.500 3z' fill='%23606060'/%3E%3C/svg%3E");
}
.off {
    color: #a0a0a0;
}
.off label, .of {
    text-shadow: 1px 1px #fff;
}
.w-units { width: 67px; }
.w-apply { width: 87px; white-space: nowrap; }
.w-side {
    width: 55px;
    padding-right: 12px;
    display: flex;
    justify-content: flex-end;
}
.checks {
    display: flex;
    flex-direction: column;
    gap: 7px;
}
.row.reset {
    gap: 14px;
    height: 26px;
}
.btn {
    width: 109px;
    height: 25px;
    border: 1px solid #adadad;
    background: #e1e1e1;
}
.btn:disabled {
    border-color: #bfbfbf;
    background: #ccc;
    color: #838383;
}
.btn.zero { width: 140px; }
.btn.revert { width: 163px; }
.btn.ok {
    border: 2px solid #0078d7;
}
.preview {
    padding-top: 19px;
    text-align: center;
}
.preview p {
    margin: 11px 0 0;
}
.bottom-grid {
    display: grid;
    grid-template-columns: 571px 332px;
    gap: 12px;
    align-items: start;
    margin-top: 13px;
}
.bottom-grid fieldset {
    padding-bottom: 9px;
}
.format {
    margin-top: 18px;
}
.first-1 { width: 199px; }
.first-2 { width: 142px; }
.first-3 { width: 111px; }
.w-format { width: 127px; }
.w-size { width: 63px; }
.w-offset { width: 102px; }
.w-size.next { width: 58px; }
.next { margin-left: 12px; }
.w-from { width: 65px; }
.w-to { width: 29px; }
.to { padding-left: 12px; }
.of { margin-left: 12px; }
.actions {
    display: flex;
    justify-content: flex-end;
    gap: 14px;
    margin-top: 14px;
    padding-right: 1px;
}
```
